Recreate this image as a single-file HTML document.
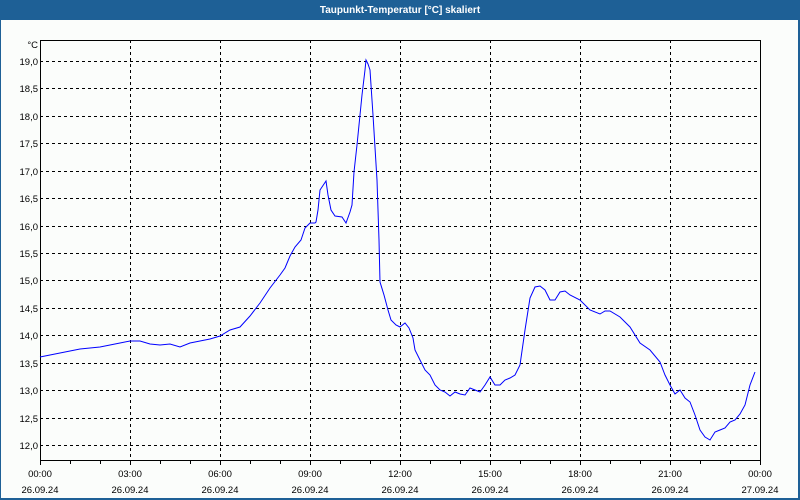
<!DOCTYPE html>
<html><head><meta charset="utf-8"><style>
html,body{margin:0;padding:0;width:800px;height:500px;overflow:hidden;background:#1e6096;}
svg{display:block}
text{font-family:"Liberation Sans","DejaVu Sans",sans-serif;font-size:9.5px;fill:#000}
</style></head><body>
<svg width="800" height="500" viewBox="0 0 800 500">
<rect x="0" y="0" width="800" height="500" fill="#1e6096"/>
<rect x="1" y="20" width="797" height="478" fill="#fbfdfb"/>
<text x="400" y="13" text-anchor="middle" style="fill:#fff;font-weight:bold;font-size:10px">Taupunkt-Temperatur [°C] skaliert</text>
<g stroke="#000" stroke-width="1" stroke-dasharray="3,3" shape-rendering="crispEdges">
<line x1="130.5" y1="40" x2="130.5" y2="460"/><line x1="220.5" y1="40" x2="220.5" y2="460"/>
<line x1="310.5" y1="40" x2="310.5" y2="460"/><line x1="400.5" y1="40" x2="400.5" y2="460"/>
<line x1="490.5" y1="40" x2="490.5" y2="460"/><line x1="580.5" y1="40" x2="580.5" y2="460"/>
<line x1="670.5" y1="40" x2="670.5" y2="460"/>
<line x1="40" y1="61.5" x2="760" y2="61.5"/><line x1="40" y1="88.5" x2="760" y2="88.5"/>
<line x1="40" y1="116.5" x2="760" y2="116.5"/><line x1="40" y1="143.5" x2="760" y2="143.5"/>
<line x1="40" y1="171.5" x2="760" y2="171.5"/><line x1="40" y1="198.5" x2="760" y2="198.5"/>
<line x1="40" y1="226.5" x2="760" y2="226.5"/><line x1="40" y1="253.5" x2="760" y2="253.5"/>
<line x1="40" y1="280.5" x2="760" y2="280.5"/><line x1="40" y1="308.5" x2="760" y2="308.5"/>
<line x1="40" y1="335.5" x2="760" y2="335.5"/><line x1="40" y1="363.5" x2="760" y2="363.5"/>
<line x1="40" y1="390.5" x2="760" y2="390.5"/><line x1="40" y1="418.5" x2="760" y2="418.5"/>
<line x1="40" y1="445.5" x2="760" y2="445.5"/>
</g>
<rect x="40.5" y="40.5" width="720" height="420" fill="none" stroke="#000" shape-rendering="crispEdges"/>
<g stroke="#000" shape-rendering="crispEdges">
<path d="M40.5 460v5M70.5 460v4M100.5 460v4M130.5 460v5M160.5 460v4M190.5 460v4M220.5 460v5M250.5 460v4M280.5 460v4M310.5 460v5M340.5 460v4M370.5 460v4M400.5 460v5M430.5 460v4M460.5 460v4M490.5 460v5M520.5 460v4M550.5 460v4M580.5 460v5M610.5 460v4M640.5 460v4M670.5 460v5M700.5 460v4M730.5 460v4M760.5 460v5"/>
</g>
<g text-anchor="end">
<text x="38" y="48">°C</text>
<text x="38" y="65">19,0</text><text x="38" y="92">18,5</text><text x="38" y="120">18,0</text>
<text x="38" y="147">17,5</text><text x="38" y="175">17,0</text><text x="38" y="202">16,5</text>
<text x="38" y="230">16,0</text><text x="38" y="257">15,5</text><text x="38" y="284">15,0</text>
<text x="38" y="312">14,5</text><text x="38" y="339">14,0</text><text x="38" y="367">13,5</text>
<text x="38" y="394">13,0</text><text x="38" y="422">12,5</text><text x="38" y="449">12,0</text>
</g>
<g text-anchor="middle">
<text x="40" y="477">00:00</text><text x="40" y="493">26.09.24</text>
<text x="130" y="477">03:00</text><text x="130" y="493">26.09.24</text>
<text x="220" y="477">06:00</text><text x="220" y="493">26.09.24</text>
<text x="310" y="477">09:00</text><text x="310" y="493">26.09.24</text>
<text x="400" y="477">12:00</text><text x="400" y="493">26.09.24</text>
<text x="490" y="477">15:00</text><text x="490" y="493">26.09.24</text>
<text x="580" y="477">18:00</text><text x="580" y="493">26.09.24</text>
<text x="670" y="477">21:00</text><text x="670" y="493">26.09.24</text>
<text x="760" y="477">00:00</text><text x="760" y="493">27.09.24</text>
</g>
<polyline fill="none" stroke="#0000ff" stroke-width="1" points="40,357 60,353 80,349 100,347 120,343 130,341 140,341 150,344 160,345 170,344 180,347 190,343 200,341 210,339 220,336 230,330 240,327 250,316 260,303 270,288 280,275 285,268 290,256 295,247 301,240 305,228 310,223 315,223 316,222 318,210 320,190 324,184 326,181 328,195 331,210 335,216 342,217 346,223 350,212 352,205 354,172 357,145 360,115 362,95 365,70 366,60 368,64 370,70 373,115 377,180 379,240 380,282 384,295 388,310 391,320 396,325 400,327 405,323 409,328 413,338 415,350 420,360 425,370 430,375 435,385 440,390 445,392 450,396 455,392 460,394 465,395 470,388 475,390 480,392 485,385 490,377 495,385 500,385 505,380 510,378 515,375 520,365 525,330 530,298 535,287 540,286 545,290 550,300 555,300 560,292 565,291 570,295 580,300 590,310 600,314 605,311 610,311 620,317 630,327 640,343 650,350 660,362 665,375 670,385 675,394 680,390 685,398 690,402 695,415 700,430 705,437 710,440 715,432 720,430 725,428 730,422 735,420 740,414 745,405 750,385 755,372"/>
</svg>
</body></html>
